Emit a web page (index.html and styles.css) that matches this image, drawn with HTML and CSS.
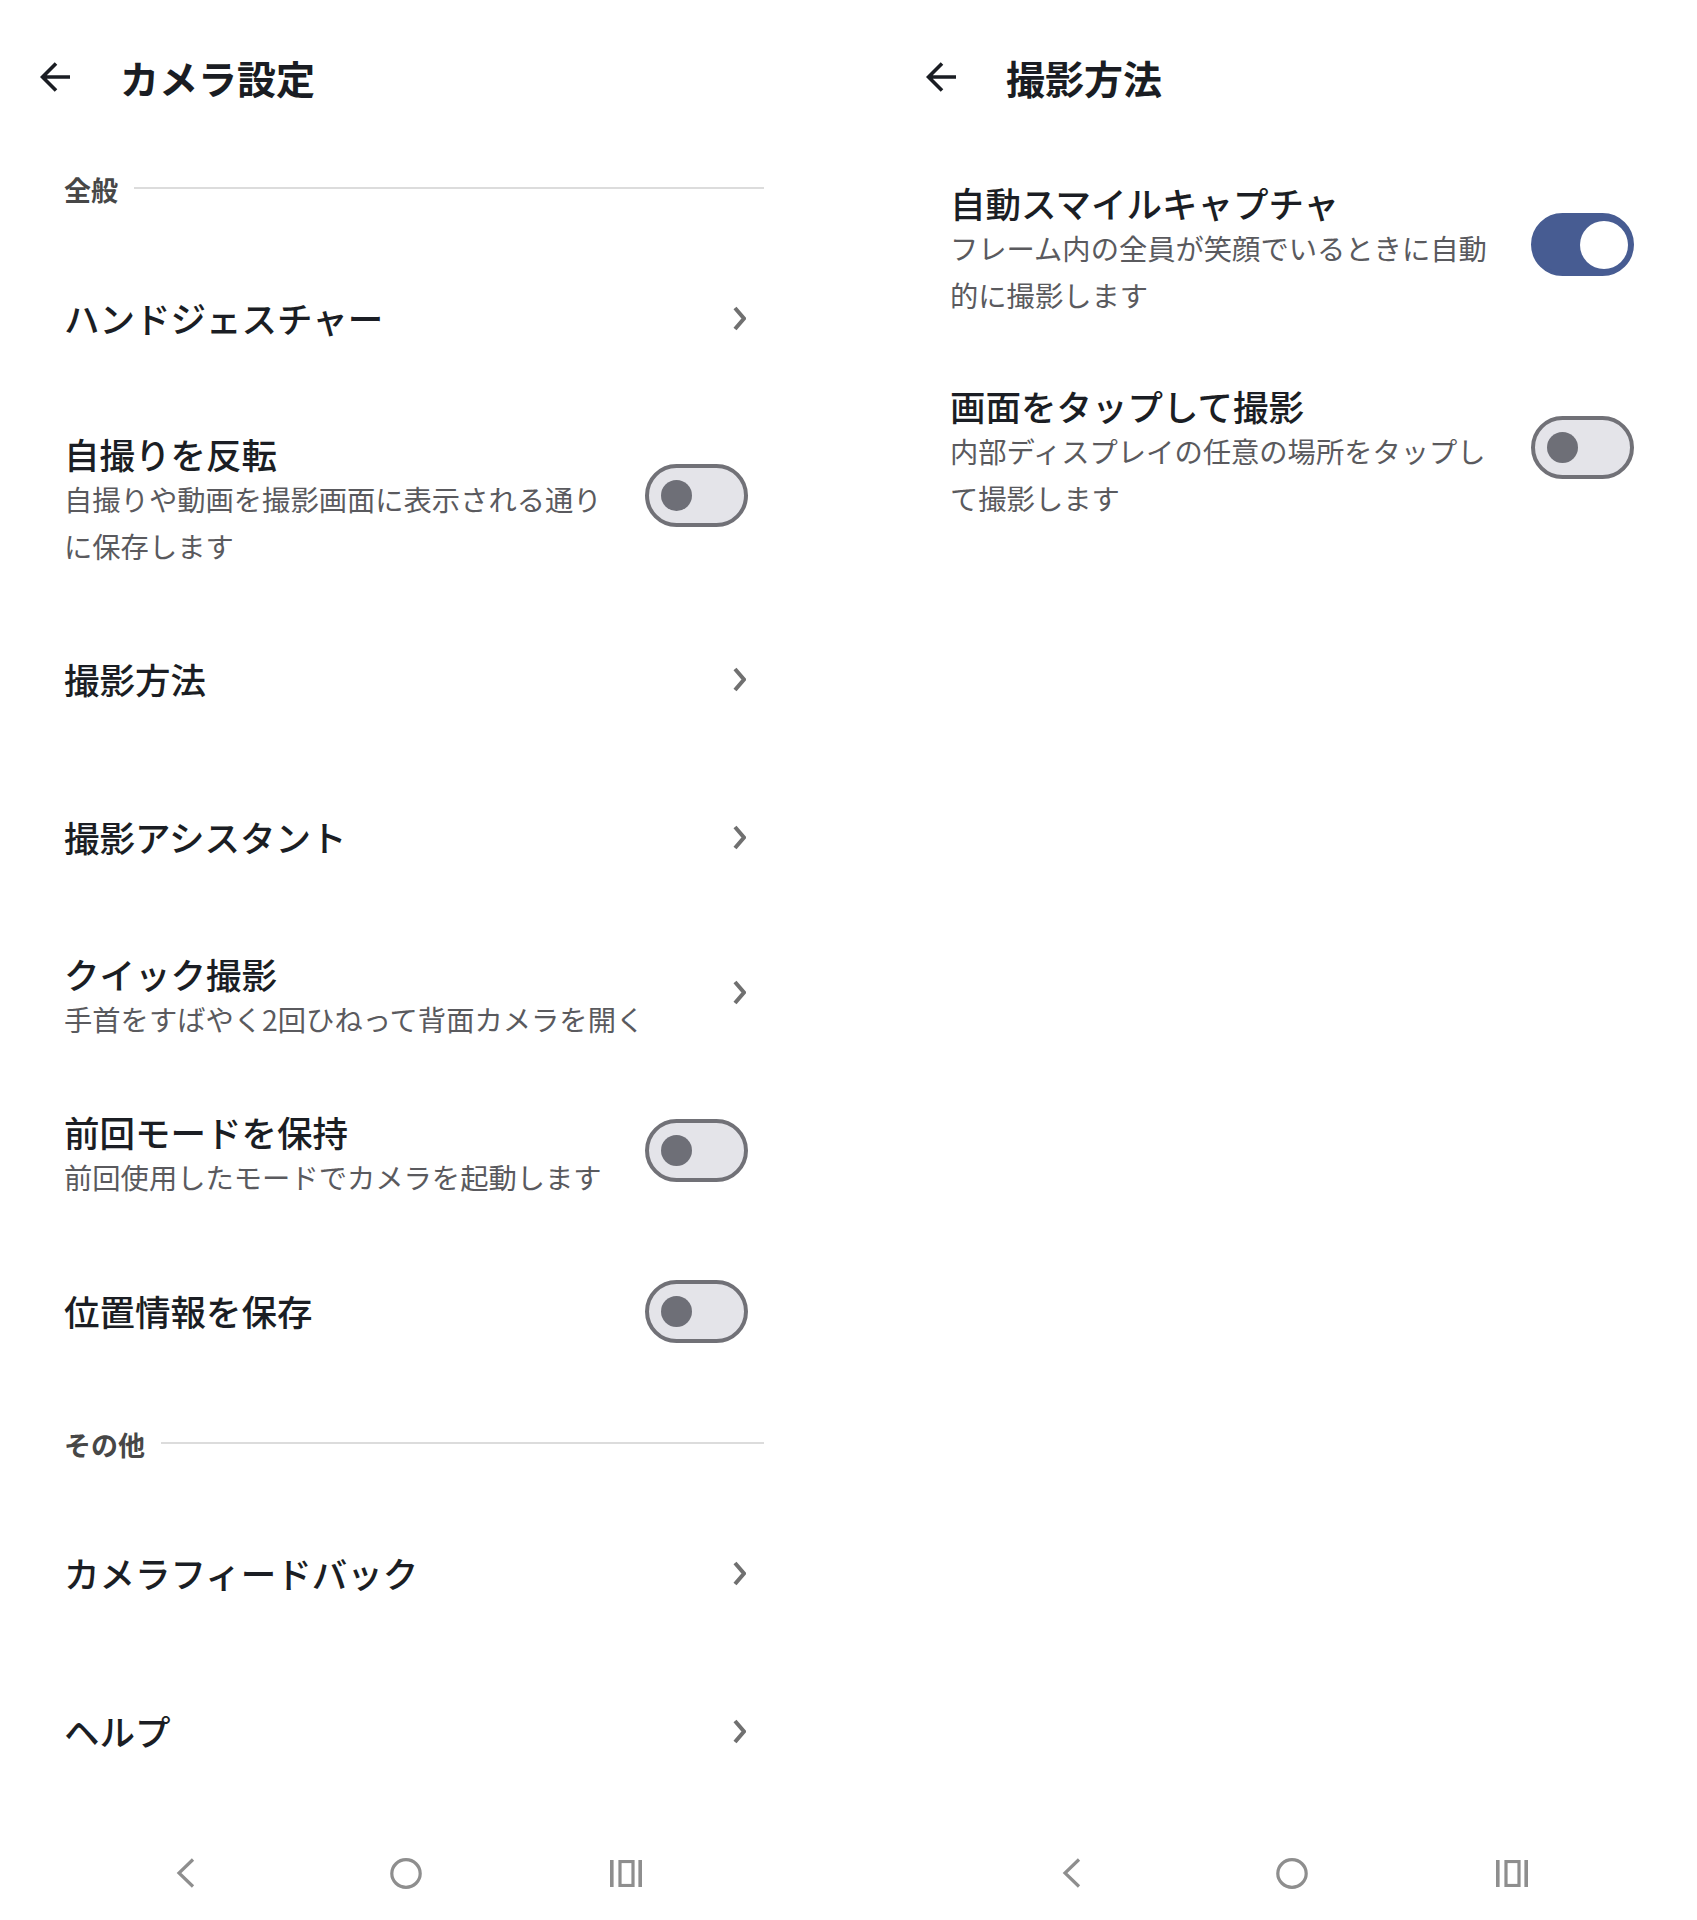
FILE: index.html
```html
<!DOCTYPE html>
<html lang="ja">
<head>
<meta charset="utf-8">
<title>カメラ設定</title>
<link rel="stylesheet" href="styles.css">
</head>
<body>
<div class="screens">
  <section class="panel">
    <header class="appbar">
      <svg class="back" viewBox="0 0 31 30" width="31" height="30"><path d="M30 15H3M16 1.5L2.5 15L16 28.5"/></svg>
      <h1>カメラ設定</h1>
    </header>
    <div class="content">
      <div class="section-head first"><span>全般</span><i class="rule"></i></div>
      <div class="row">
        <div class="text"><div class="title">ハンドジェスチャー</div></div>
        <svg class="chev" viewBox="0 0 13 25" width="13" height="25"><path d="M2 2L11 12.5L2 23"/></svg>
      </div>
      <div class="row multi">
        <div class="text">
          <div class="title">自撮りを反転</div>
          <div class="sub">自撮りや動画を撮影画面に表示される通りに保存します</div>
        </div>
        <span class="toggle"><span class="knob"></span></span>
      </div>
      <div class="row">
        <div class="text"><div class="title">撮影方法</div></div>
        <svg class="chev" viewBox="0 0 13 25" width="13" height="25"><path d="M2 2L11 12.5L2 23"/></svg>
      </div>
      <div class="row">
        <div class="text"><div class="title">撮影アシスタント</div></div>
        <svg class="chev" viewBox="0 0 13 25" width="13" height="25"><path d="M2 2L11 12.5L2 23"/></svg>
      </div>
      <div class="row multi">
        <div class="text">
          <div class="title">クイック撮影</div>
          <div class="sub">手首をすばやく2回ひねって背面カメラを開く</div>
        </div>
        <svg class="chev" viewBox="0 0 13 25" width="13" height="25"><path d="M2 2L11 12.5L2 23"/></svg>
      </div>
      <div class="row multi">
        <div class="text">
          <div class="title">前回モードを保持</div>
          <div class="sub">前回使用したモードでカメラを起動します</div>
        </div>
        <span class="toggle"><span class="knob"></span></span>
      </div>
      <div class="row">
        <div class="text"><div class="title">位置情報を保存</div></div>
        <span class="toggle"><span class="knob"></span></span>
      </div>
      <div class="section-head second"><span>その他</span><i class="rule"></i></div>
      <div class="row">
        <div class="text"><div class="title">カメラフィードバック</div></div>
        <svg class="chev" viewBox="0 0 13 25" width="13" height="25"><path d="M2 2L11 12.5L2 23"/></svg>
      </div>
      <div class="row">
        <div class="text"><div class="title">ヘルプ</div></div>
        <svg class="chev" viewBox="0 0 13 25" width="13" height="25"><path d="M2 2L11 12.5L2 23"/></svg>
      </div>
    </div>
    <nav class="navbar">
      <span class="nav-icon"><svg viewBox="0 0 19 30" width="19" height="30"><path d="M17 1.5L3 15L17 28.5"/></svg></span>
      <span class="nav-icon"><svg viewBox="0 0 32 31" width="32" height="31"><ellipse cx="16" cy="15.5" rx="14.2" ry="13.8"/></svg></span>
      <span class="nav-icon"><svg viewBox="0 0 32 27" width="32" height="27"><path class="fill" d="M0 0H3.6V27H0ZM28.4 0H32V27H28.4Z"/><rect x="10" y="1.5" width="13" height="24"/></svg></span>
    </nav>
  </section>

  <section class="panel">
    <header class="appbar">
      <svg class="back" viewBox="0 0 31 30" width="31" height="30"><path d="M30 15H3M16 1.5L2.5 15L16 28.5"/></svg>
      <h1>撮影方法</h1>
    </header>
    <div class="content plain">
      <div class="row multi">
        <div class="text">
          <div class="title">自動スマイルキャプチャ</div>
          <div class="sub">フレーム内の全員が笑顔でいるときに自動的に撮影します</div>
        </div>
        <span class="toggle on"><span class="knob"></span></span>
      </div>
      <div class="row multi">
        <div class="text">
          <div class="title">画面をタップして撮影</div>
          <div class="sub">内部ディスプレイの任意の場所をタップして撮影します</div>
        </div>
        <span class="toggle"><span class="knob"></span></span>
      </div>
    </div>
    <nav class="navbar">
      <span class="nav-icon"><svg viewBox="0 0 19 30" width="19" height="30"><path d="M17 1.5L3 15L17 28.5"/></svg></span>
      <span class="nav-icon"><svg viewBox="0 0 32 31" width="32" height="31"><ellipse cx="16" cy="15.5" rx="14.2" ry="13.8"/></svg></span>
      <span class="nav-icon"><svg viewBox="0 0 32 27" width="32" height="27"><path class="fill" d="M0 0H3.6V27H0ZM28.4 0H32V27H28.4Z"/><rect x="10" y="1.5" width="13" height="24"/></svg></span>
    </nav>
  </section>
</div>
</body>
</html>
```

FILE: styles.css
```css
html, body {
  margin: 0;
  padding: 0;
  background: #ffffff;
}

body {
  font-family: "Noto Sans CJK JP", "Noto Sans", sans-serif;
  color: #1b1e24;
}

.screens {
  display: flex;
  gap: 75px;
  width: 1697px;
}

.panel {
  width: 811px;
  height: 1920px;
  display: flex;
  flex-direction: column;
  flex: none;
}

.appbar {
  height: 148px;
  box-sizing: border-box;
  padding: 10px 0 4px 40px;
  display: flex;
  align-items: center;
  gap: 49px;
}

.back {
  flex: none;
  fill: none;
  stroke: #1a1d23;
  stroke-width: 3.6;
  stroke-linejoin: miter;
}

.appbar h1 {
  margin: 0;
  font-size: 39px;
  line-height: 48px;
  font-weight: 700;
  color: #1a1d23;
}

.content {
  padding: 0 63px 0 64px;
}

.content.plain {
  margin-top: -2px;
}

.section-head {
  display: flex;
  align-items: center;
  gap: 16px;
  height: 40px;
  margin: 22px -16px 29px 0;
  font-size: 27px;
  line-height: 40px;
  font-weight: 700;
  color: #474747;
}

.section-head.second {
  margin-top: 35px;
}

.rule {
  flex: 1;
  height: 2px;
  margin-bottom: 5px;
  background: #dcdcdc;
}

.row {
  display: flex;
  align-items: center;
  gap: 40px;
  min-height: 158px;
  box-sizing: border-box;
  padding: 33px 0;
}

.row.multi {
  padding: 35px 0 31px;
}

.text {
  flex: 1;
  min-width: 0;
}

.title {
  font-size: 35.5px;
  line-height: 44px;
  font-weight: 500;
  color: #1b1e24;
}

.sub {
  font-size: 28.3px;
  line-height: 46.5px;
  font-weight: 400;
  color: #5a5a5e;
}

.chev {
  flex: none;
  margin-right: 2px;
  fill: none;
  stroke: #707070;
  stroke-width: 4;
}

.row.multi .chev,
.row.multi .toggle {
  margin-bottom: 10px;
}

.toggle {
  position: relative;
  flex: none;
  width: 103px;
  height: 63px;
  box-sizing: border-box;
  border: 4px solid #717177;
  border-radius: 32px;
  background: #e4e4e9;
}

.toggle .knob {
  position: absolute;
  left: 12px;
  top: 50%;
  width: 31px;
  height: 31px;
  margin-top: -15.5px;
  border-radius: 50%;
  background: #6e6f77;
}

.toggle.on {
  background: #475c92;
  border-color: #475c92;
}

.toggle.on .knob {
  left: auto;
  right: 2px;
  width: 48px;
  height: 48px;
  margin-top: -24px;
  background: #ffffff;
}

.navbar {
  margin-top: auto;
  height: 94px;
  display: flex;
  justify-content: center;
  align-items: center;
  gap: 180px;
}

.nav-icon {
  width: 40px;
  display: flex;
  justify-content: center;
  align-items: center;
}

.nav-icon svg {
  fill: none;
  stroke: #8e8e8e;
  stroke-width: 3.2;
}

.nav-icon svg .fill {
  fill: #8e8e8e;
  stroke: none;
}
```
